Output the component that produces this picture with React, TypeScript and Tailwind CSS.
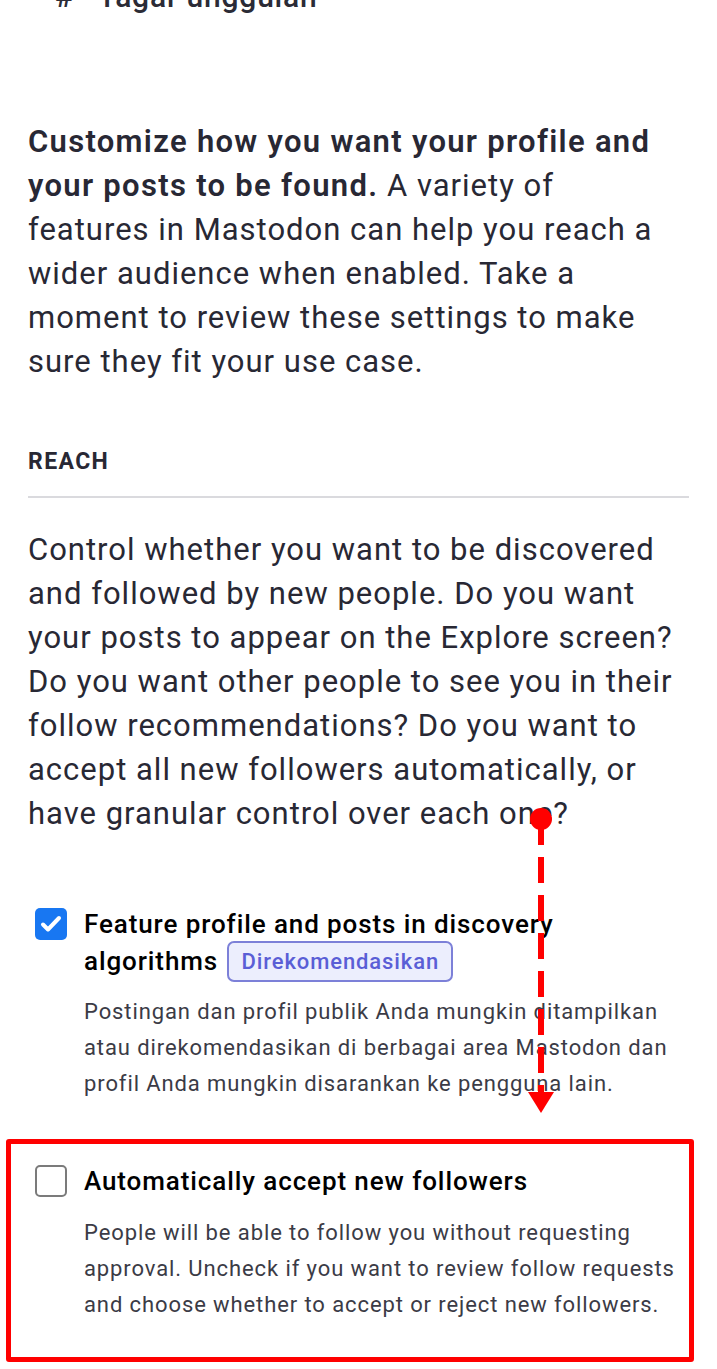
import React from "react";

function Checkbox({ checked }: { checked: boolean }) {
  if (checked) {
    return (
      <div className="w-[32px] h-[32px] rounded-[5px] bg-[#1877f2] flex items-center justify-center shrink-0">
        <svg width="24" height="24" viewBox="0 0 24 24" fill="none">
          <path d="M4 12.5l5 5L20 6" stroke="white" strokeWidth="4" strokeLinecap="round" strokeLinejoin="round" />
        </svg>
      </div>
    );
  }
  return <div className="w-[32px] h-[32px] rounded-[5px] border-2 border-[#7b7b7b] bg-white shrink-0" />;
}

export default function App() {
  return (
    <div className="relative bg-white min-h-[1369px] w-[717px] overflow-hidden text-[#282834]" style={{ fontFamily: "Roboto, 'Liberation Sans', sans-serif" }}>
      <div className="px-[28px]">
        {/* header cut off at top */}
        <div className="flex items-center mt-[-24px] h-[40px] text-[30px] tracking-[0.8px] font-medium text-[#2b2b36]">
          <span className="ml-[27px] w-[43px]">#</span>
          <span>Tagar unggulan</span>
        </div>

        <p className="mt-[104px] pr-[12px] text-[31px] leading-[44px] tracking-[1px]">
          <strong className="font-semibold tracking-[1.3px]">Customize how you want your profile and your posts to be found.</strong> A variety of features in Mastodon can help you reach a wider audience when enabled. Take a moment to review these settings to make sure they fit your use case.
        </p>

        <h3 className="mt-[63px] text-[23px] leading-[30px] font-bold tracking-[1.4px] text-[#282834]">REACH</h3>
        <div className="mt-[19px] h-[2px] bg-[#dadade]" />

        <p className="mt-[30px] text-[31px] leading-[44px] tracking-[1px]">
          Control whether you want to be discovered and followed by new people. Do you want your posts to appear on the Explore screen? Do you want other people to see you in their follow recommendations? Do you want to accept all new followers automatically, or have granular control over each one?
        </p>

        {/* option 1 */}
        <div className="mt-[70px] flex">
          <div className="pl-[7px] pt-[2px] w-[56px] shrink-0">
            <Checkbox checked />
          </div>
          <div className="pr-[110px]">
            <div className="text-[26px] leading-[37px] font-medium tracking-[0.9px] text-black">
              Feature profile and posts in discovery algorithms{" "}
              <span className="inline-block align-middle ml-[2px] mt-[-4px] px-[12px] h-[41px] leading-[37px] rounded-[7px] border-2 border-[#7c80d8] bg-[#eceefd] text-[#5a5ed6] text-[22px] tracking-[0.9px] font-medium">
                Direkomendasikan
              </span>
            </div>
          </div>
        </div>
        <p className="mt-[12px] ml-[56px] text-[22px] leading-[36px] tracking-[0.9px] text-[#3b3b46]">
          Postingan dan profil publik Anda mungkin ditampilkan atau direkomendasikan di berbagai area Mastodon dan profil Anda mungkin disarankan ke pengguna lain.
        </p>

        {/* option 2, highlighted */}
        <div className="mt-[37px] ml-[-22px] mr-[-5px] border-[5px] border-[#ff0000] rounded-[3px] pl-[24px] pt-[19px] pb-[34px] flex">
          <div className="pt-[2px] w-[49px] shrink-0">
            <Checkbox checked={false} />
          </div>
          <div>
            <div className="text-[26px] leading-[37px] font-medium tracking-[0.9px] text-black">Automatically accept new followers</div>
            <p className="mt-[15px] text-[22px] leading-[36px] tracking-[0.9px] text-[#3b3b46]">
              People will be able to follow you without requesting approval. Uncheck if you want to review follow requests and choose whether to accept or reject new followers.
            </p>
          </div>
        </div>
      </div>

      {/* red annotation arrow */}
      <svg className="absolute left-[520px] top-[800px]" width="44" height="320" viewBox="0 0 44 320">
        <circle cx="21" cy="19" r="11" fill="#ff0000" />
        <line x1="21" y1="19" x2="21" y2="296" stroke="#ff0000" strokeWidth="6" strokeDasharray="26 12" />
        <polygon points="8,292 34,292 21,313" fill="#ff0000" />
      </svg>
    </div>
  );
}
